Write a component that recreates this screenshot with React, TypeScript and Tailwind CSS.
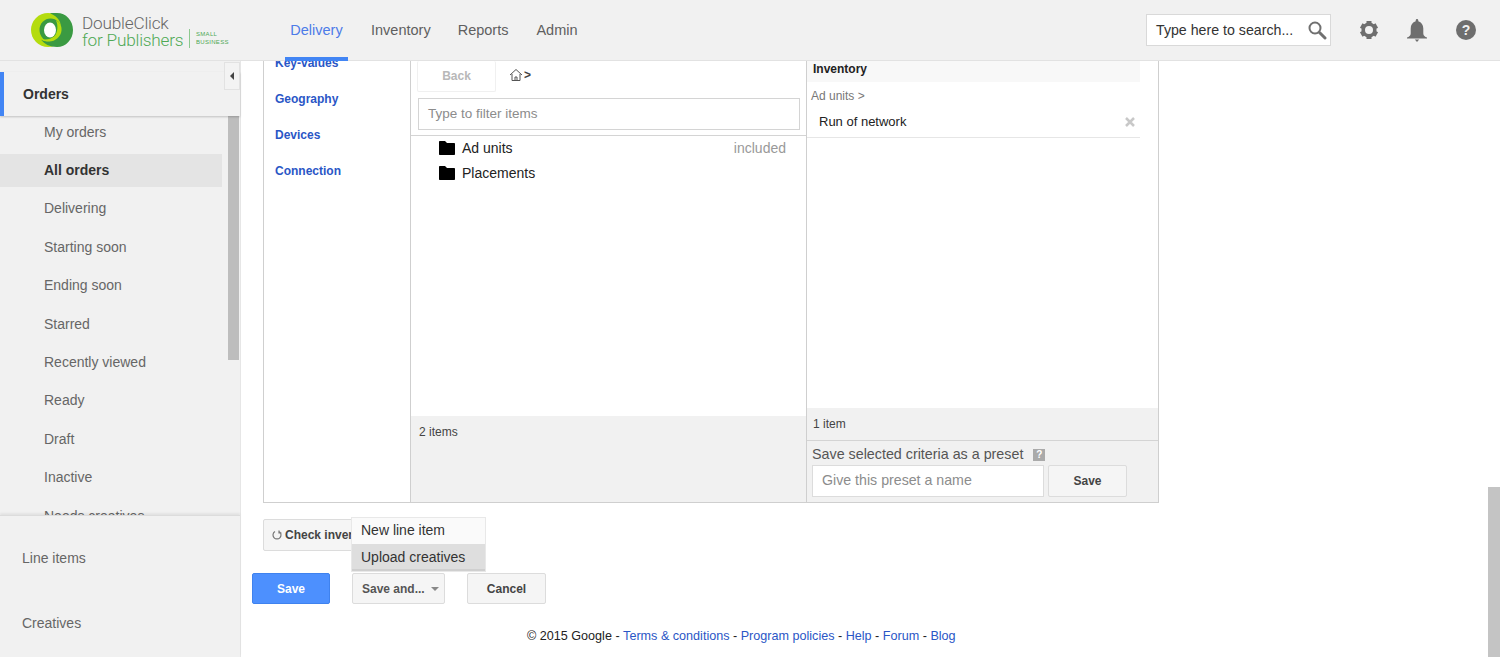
import React from "react";

const subItems = ["My orders", "All orders", "Delivering", "Starting soon", "Ending soon", "Starred", "Recently viewed", "Ready", "Draft", "Inactive", "Needs creatives"];

function Logo() {
  return (
    <svg width="42" height="34" viewBox="0 0 42 34" className="block">
      <circle cx="17" cy="17" r="17" fill="#b4dc0e" />
      <ellipse cx="19.500" cy="17" rx="11" ry="11.500" fill="#3a9a42" />
      <path d="M19 .3C22 -.2 24 0 26 0C35 0 42 7.500 42 17C42 26.500 35 34 26 34C19 34 13 31 10 26.500C14 29.500 21 29 25 25C29 21 31 15 29 9C27 4.500 23 2 19 .3Z" fill="#3a9a42" />
      <path d="M25 7.500C29 9.500 31 13 30.500 17.500C30 23.500 24.500 28.500 18 28.500C15 28.500 12 27.500 10 26C14 27 20 26.500 23.500 23C26.500 20 27.500 13 25 7.500Z" fill="#b4dc0e" />
      <ellipse cx="19" cy="17" rx="6" ry="7.500" fill="#ffffff" />
    </svg>
  );
}

function Header() {
  return (
    <header className="h-[61px] shrink-0 bg-[#f1f1f1] border-b border-[#e2e2e2] flex items-center relative">
      <div className="ml-[31px] w-[45px] shrink-0"><Logo /></div>
      <div className="ml-[6px] mt-[4px] w-[108px] shrink-0 font-['Roboto',sans-serif] font-light text-[17.200px] leading-[17.500px]">
        <div className="text-[#666666] tracking-[-0.2px]">DoubleClick</div>
        <div className="text-[#4fa955] tracking-[-0.2px]">for Publishers</div>
      </div>
      <div className="w-px h-[19px] bg-[#8cc98f] mt-[16px] ml-[-1px]"></div>
      <div className="ml-[6px] mt-[15px] w-[40px] text-[6px] leading-[8px] text-[#4fa955] tracking-[0.3px]">
        <div>SMALL</div>
        <div>BUSINESS</div>
      </div>
      <nav className="ml-[49px] flex h-full text-[14.500px]">
        <div className="relative w-[63px] pt-[2px] flex items-center justify-center text-[#4d7be8]">
          Delivery
          <div className="absolute bottom-[-1px] left-0 right-0 h-[4px] bg-[#4285f4]"></div>
        </div>
        <div className="ml-[23px] pt-[2px] flex items-center text-[#5f5f5f]">Inventory</div>
        <div className="ml-[27px] pt-[2px] flex items-center text-[#5f5f5f]">Reports</div>
        <div className="ml-[28px] pt-[2px] flex items-center text-[#5f5f5f]">Admin</div>
      </nav>
      <div className="ml-auto mr-[169px] w-[185px] h-[32px] bg-white border border-[#d9d9d9] flex items-center pl-[9px] text-[14.200px] text-[#333]">
        <span className="pt-[2px]">Type here to search...</span>
        <svg width="20" height="20" viewBox="0 0 20 20" className="ml-[14px] shrink-0" fill="none" stroke="#707070">
          <circle cx="8" cy="8" r="5.500" strokeWidth="2" />
          <path d="M12.500 12.500L18 18" strokeWidth="3" strokeLinecap="round" />
        </svg>
      </div>
      <svg width="20" height="20" viewBox="0 0 20 20" className="absolute left-[1359px] top-[20px]" fill="#6e6e6e">
        <circle cx="10" cy="10" r="5.800" fill="none" stroke="#6e6e6e" strokeWidth="3.600" />
        <rect x="7.500" y="1" width="5" height="4" />
        <rect x="7.500" y="1" width="5" height="4" transform="rotate(60 10 10)" />
        <rect x="7.500" y="1" width="5" height="4" transform="rotate(120 10 10)" />
        <rect x="7.500" y="1" width="5" height="4" transform="rotate(180 10 10)" />
        <rect x="7.500" y="1" width="5" height="4" transform="rotate(240 10 10)" />
        <rect x="7.500" y="1" width="5" height="4" transform="rotate(300 10 10)" />
      </svg>
      <svg width="20" height="23" viewBox="0 0 20 23" className="absolute left-[1407px] top-[19px]" fill="#6e6e6e">
        <path d="M10 0C10.800 0 11.300 .6 11.300 1.500V2.300C14.500 3.200 16.300 6 16.300 9.500V14.500C16.300 16.500 18 18 20 18.500V19.500H0V18.500C2 18 3.700 16.500 3.700 14.500V9.500C3.700 6 5.500 3.200 8.700 2.300V1.500C8.700 .6 9.200 0 10 0Z" />
        <path d="M7.800 20.500H12.200L10 23Z" />
      </svg>
      <svg width="20" height="20" viewBox="0 0 20 20" className="absolute left-[1456px] top-[20px]">
        <circle cx="10" cy="10" r="10" fill="#6e6e6e" />
        <text x="10" y="15" textAnchor="middle" fontSize="14" fontWeight="700" fontFamily="Liberation Sans" fill="#f1f1f1">?</text>
      </svg>
    </header>
  );
}

function Sidebar() {
  return (
    <aside className="w-[241px] shrink-0 bg-[#f1f1f1] border-r border-[#e6e6e6] flex flex-col relative">
      <div className="h-[11px] shrink-0"></div>
      <div className="h-[44px] shrink-0 flex items-center border-l-[4px] border-[#4285f4] pl-[19px] text-[14px] font-bold text-[#333] shadow-[0_1px_2px_rgba(0,0,0,0.2)] relative z-10 bg-[#f1f1f1]">
        Orders
      </div>
      <button className="absolute left-[224px] top-[1px] w-[16px] h-[28px] bg-[#f3f3f3] border border-[#e2e2e2] flex items-center justify-center z-20">
        <span className="w-0 h-0 border-y-[4px] border-y-transparent border-r-[4px] border-r-[#444]"></span>
      </button>
      <div className="h-[399px] shrink-0 overflow-hidden flex relative">
        <div className="w-[222px] shrink-0">
          {subItems.map((item, i) => (
            <div
              key={item}
              className={
                i === 1
                  ? "h-[33px] mt-[5px] flex items-center pl-[44px] text-[14px] font-bold text-[#333] bg-[#e4e4e4]"
                  : i === 0
                    ? "h-[33px] mt-0 flex items-center pl-[44px] text-[14px] text-[#666]"
                    : "h-[33px] mt-[5.400px] flex items-center pl-[44px] text-[14px] text-[#666]"
              }
            >
              {item}
            </div>
          ))}
        </div>
        <div className="ml-[6px] w-[11px] h-[244px] bg-[#bdbdbd]"></div>
      </div>
      <div className="flex-1 border-t border-[#dcdcdc] shadow-[0_-2px_2px_rgba(0,0,0,0.06)] bg-[#f1f1f1] relative z-10 pl-[22px] text-[14px] text-[#666]">
        <div className="mt-[34px] leading-[16px]">Line items</div>
        <div className="mt-[49px] leading-[16px]">Creatives</div>
      </div>
    </aside>
  );
}

function Folder() {
  return (
    <svg width="16" height="14" viewBox="0 0 16 14" className="shrink-0">
      <path d="M0 1C0 .4.4 0 1 0H6L8 2H15C15.600 2 16 2.400 16 3V13C16 13.600 15.600 14 15 14H1C.4 14 0 13.600 0 13Z" fill="#000" />
    </svg>
  );
}

function Btn({ className, children }: { className: string; children: React.ReactNode }) {
  return (
    <div className={"flex items-center justify-center bg-[#f5f5f5] border border-[#dcdcdc] rounded-[2px] text-[12px] font-bold text-[#444] " + className}>
      {children}
    </div>
  );
}

function Main() {
  return (
    <main className="flex-1 min-w-0 relative overflow-hidden bg-white">
      <div className="ml-[22px] w-[896px] h-[442px] flex border-x border-b border-[#cfcfcf] overflow-hidden">
        <div className="w-[147px] shrink-0 pl-[11px] font-bold text-[12px] text-[#2a56c6] border-r border-[#cfcfcf]">
          <div className="-mt-[8px] h-[36px] leading-[20px]">Key-values</div>
          <div className="h-[36px] leading-[20px]">Geography</div>
          <div className="h-[36px] leading-[20px]">Devices</div>
          <div className="h-[36px] leading-[20px]">Connection</div>
        </div>
        <div className="w-[396px] shrink-0 flex flex-col border-r border-[#cfcfcf]">
          <div className="h-[31px] flex items-start shrink-0">
            <div className="ml-[6px] w-[79px] h-[31px] border border-t-0 border-[#f0f0f0] rounded-[2px] flex items-center justify-center text-[12px] font-bold text-[#b8b8b8]">Back</div>
            <svg width="14" height="14" viewBox="0 0 14 14" className="ml-[13px] mt-[7px]" fill="none" stroke="#555">
              <path d="M1 7L7 1.500L13 7M3 6V12.500H11V6M6 12.500V9H8V12.500" strokeWidth="1" />
            </svg>
            <span className="ml-[1px] mt-[6px] text-[12px] leading-[16px] text-[#444] font-bold">&gt;</span>
          </div>
          <div className="ml-[7px] mt-[6px] w-[382px] h-[32px] shrink-0 border border-[#d4d4d4] flex items-center pl-[9px] text-[13.500px] text-[#8c8c8c]">Type to filter items</div>
          <div className="mt-[5px] border-t border-[#d4d4d4] flex-1 text-[14px] text-[#222]">
            <div className="h-[24px] flex items-center pl-[28px]">
              <Folder />
              <span className="ml-[7px]">Ad units</span>
              <span className="ml-auto mr-[20px] text-[#999]">included</span>
            </div>
            <div className="h-[26px] flex items-center pl-[28px]">
              <Folder />
              <span className="ml-[7px]">Placements</span>
            </div>
          </div>
          <div className="h-[86px] shrink-0 bg-[#f1f1f1] pl-[8px] pt-[8px] text-[12px] leading-[16px] text-[#444]">2 items</div>
        </div>
        <div className="flex-1 min-w-0 flex flex-col">
          <div className="mr-[18px] h-[21px] shrink-0 bg-[#f8f8f8] pl-[6px] text-[12px] font-bold leading-[17px] text-[#222]">Inventory</div>
          <div className="mt-[6px] pl-[4px] text-[12px] leading-[16px] text-[#777] h-[16px]">Ad units &gt;</div>
          <div className="mr-[18px] mt-[3px] h-[31px] shrink-0 border-b border-[#e6e6e6] flex items-center pl-[12px] pr-[5px] text-[13px] text-[#222]">
            <span>Run of network</span>
            <svg width="10" height="10" viewBox="0 0 10 10" className="ml-auto" stroke="#c8c8c8" strokeWidth="2.500">
              <path d="M1 1L9 9M9 1L1 9" />
            </svg>
          </div>
          <div className="flex-1"></div>
          <div className="h-[33px] shrink-0 bg-[#f1f1f1] border-b border-[#d4d4d4] pl-[6px] text-[12px] leading-[32px] text-[#444]">1 item</div>
          <div className="h-[61px] shrink-0 bg-[#f1f1f1] pl-[5px]">
            <div className="h-[24px] pt-[3px] flex items-center text-[14.300px] text-[#555]">
              Save selected criteria as a preset
              <span className="ml-[10px] w-[12px] h-[12px] bg-[#aaa] text-white text-[10px] font-bold flex items-center justify-center">?</span>
            </div>
            <div className="flex">
              <div className="w-[232px] h-[32px] bg-white border border-[#dcdcdc] flex items-center pl-[9px] text-[14.200px] text-[#8c8c8c]">Give this preset a name</div>
              <Btn className="ml-[4px] w-[79px] h-[32px]">Save</Btn>
            </div>
          </div>
        </div>
      </div>
      <Btn className="ml-[22px] mt-[16px] w-[120px] h-[32px] !justify-start pl-[8px] whitespace-nowrap overflow-hidden">
        <svg width="10" height="10" viewBox="0 0 10 10" className="mr-[3px] shrink-0" fill="none" stroke="#777" strokeWidth="1.200">
          <path d="M3 1.500A4 4 0 1 0 7 1.500M7 .5V3H9.500" />
        </svg>
        Check inventory
      </Btn>
      <div className="ml-[11px] mt-[22px] flex">
        <div className="w-[78px] h-[31px] bg-[#4d90fe] border border-[#3f82ee] rounded-[2px] flex items-center justify-center text-[12px] font-bold text-white">Save</div>
        <Btn className="ml-[22px] w-[93px] h-[31px] !justify-start pl-[9px] text-[#555]">
          Save and...
          <span className="ml-[6px] w-0 h-0 border-x-[4px] border-x-transparent border-t-[4px] border-t-[#888]"></span>
        </Btn>
        <Btn className="ml-[22px] w-[79px] h-[31px]">Cancel</Btn>
      </div>
      <div className="ml-[286px] mt-[24px] flex text-[12.600px] leading-[16px] text-[#222] whitespace-nowrap">
        © 2015 Google -&nbsp;<span className="text-[#2a56c6]">Terms &amp; conditions</span>&nbsp;-&nbsp;<span className="text-[#2a56c6]">Program policies</span>&nbsp;-&nbsp;<span className="text-[#2a56c6]">Help</span>&nbsp;-&nbsp;<span className="text-[#2a56c6]">Forum</span>&nbsp;-&nbsp;<span className="text-[#2a56c6]">Blog</span>
      </div>
      <div className="absolute left-[110px] top-[456px] w-[135px] h-[55px] bg-[#fafafa] border border-[#e8e8e8] text-[14px] text-[#333] z-20">
        <div className="h-[26px] pb-[1px] flex items-center pl-[9px]">New line item</div>
        <div className="h-[27px] pt-[1px] flex items-center pl-[9px] bg-[#dedede] border-b-2 border-[#cfcfcf]">Upload creatives</div>
      </div>
      <div className="absolute right-0 top-[426px] w-[12px] h-[170px] bg-[#c4c4c4]"></div>
    </main>
  );
}

export default function App() {
  return (
    <div className="w-[1500px] h-[657px] overflow-hidden flex flex-col bg-white font-['Liberation_Sans',Arial,sans-serif]">
      <Header />
      <div className="flex flex-1 min-h-0">
        <Sidebar />
        <Main />
      </div>
    </div>
  );
}
